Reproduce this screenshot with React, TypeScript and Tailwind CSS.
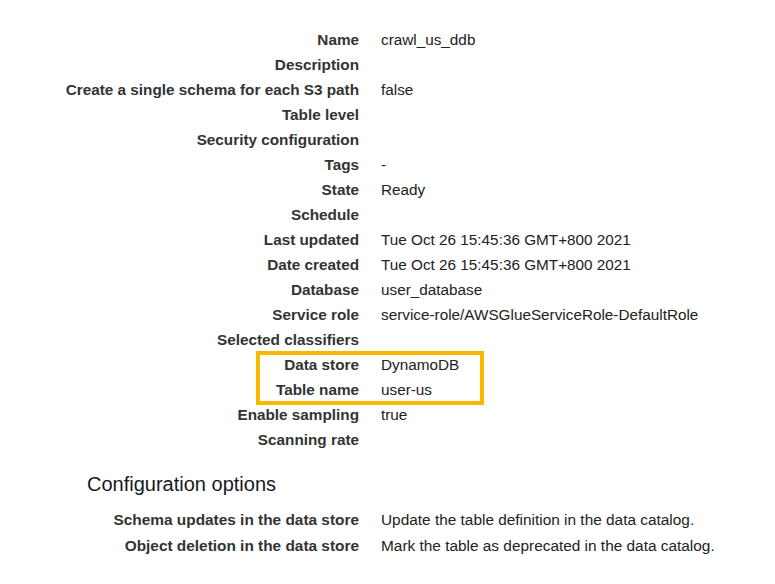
import React from 'react';

interface Row {
  label: string;
  value?: string;
}

const topRows: Row[] = [
  { label: 'Name', value: 'crawl_us_ddb' },
  { label: 'Description' },
  { label: 'Create a single schema for each S3 path', value: 'false' },
  { label: 'Table level' },
  { label: 'Security configuration' },
  { label: 'Tags', value: '-' },
  { label: 'State', value: 'Ready' },
  { label: 'Schedule' },
  { label: 'Last updated', value: 'Tue Oct 26 15:45:36 GMT+800 2021' },
  { label: 'Date created', value: 'Tue Oct 26 15:45:36 GMT+800 2021' },
  { label: 'Database', value: 'user_database' },
  { label: 'Service role', value: 'service-role/AWSGlueServiceRole-DefaultRole' },
  { label: 'Selected classifiers' },
];

const highlighted: Row[] = [
  { label: 'Data store', value: 'DynamoDB' },
  { label: 'Table name', value: 'user-us' },
];

const afterRows: Row[] = [
  { label: 'Enable sampling', value: 'true' },
  { label: 'Scanning rate' },
];

const configRows: Row[] = [
  { label: 'Schema updates in the data store', value: 'Update the table definition in the data catalog.' },
  { label: 'Object deletion in the data store', value: 'Mark the table as deprecated in the data catalog.' },
];

const DetailRow: React.FC<{ row: Row; tall?: boolean }> = ({ row, tall }) => (
  <div className={`flex whitespace-nowrap ${tall ? 'h-[26px] leading-[26px] text-[15.4px]' : 'h-[25px] leading-[25px] text-[15.3px]'}`}>
    <div className="w-[359px] shrink-0 text-right font-bold text-[#333]">{row.label}</div>
    <div className="pl-[22px] text-[#222]">{row.value}</div>
  </div>
);

const App: React.FC = () => {
  return (
    <div
      className="w-[775px] h-[584px] bg-white overflow-hidden pt-[27px]"
      style={{ fontFamily: '"Liberation Sans", Arial, sans-serif' }}
    >
      {topRows.map((r) => (
        <DetailRow key={r.label} row={r} />
      ))}

      <div className="relative">
        {highlighted.map((r) => (
          <DetailRow key={r.label} row={r} />
        ))}
        {/* annotation box */}
        <span className="absolute left-[256px] top-[-1px] w-[228px] h-[54px] border-4 border-[#f9b800] pointer-events-none" />
      </div>

      {afterRows.map((r) => (
        <DetailRow key={r.label} row={r} />
      ))}

      <h2 className="mt-[18px] pl-[87px] text-[20px] leading-[28px] text-[#16191f]">Configuration options</h2>

      <div className="mt-[9px]">
        {configRows.map((r) => (
          <DetailRow key={r.label} row={r} tall />
        ))}
      </div>
    </div>
  );
};

export default App;
